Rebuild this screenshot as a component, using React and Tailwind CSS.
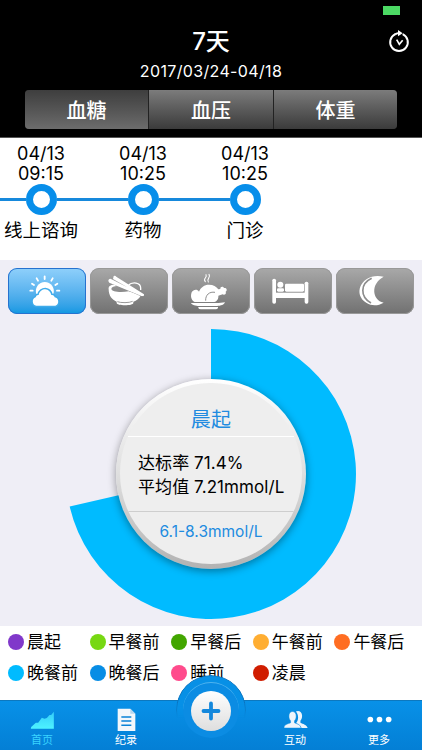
import React from "react";

const ICON_COMMON = { fill: "#fff", stroke: "none" };

function SunCloud() {
  return (
    <svg viewBox="24 30 234 138" className="block h-full w-full" {...ICON_COMMON}>
      <g stroke="#fff" strokeWidth="5.5" strokeLinecap="round">
        <path d="M134 55v8M110 61l4 7M158 61l-4 7M96 77l6 4M172 77l-6 4M91 98h7M171 98h7" />
      </g>
      <path d="M109 108a27 27 0 1 1 51 0z" />
      <path
        d="M109 143a13 13 0 0 1-2-25q2-8 9-7c2-11 11-17 20-17 9 1 16 8 18 17 6-1 9 2 10 7a13 13 0 0 1 2 25z"
        stroke="#3fabea"
        strokeWidth="9"
        style={{ paintOrder: "stroke" }}
      />
    </svg>
  );
}

function Bowl() {
  return (
    <svg viewBox="270 30 234 138" className="block h-full w-full" {...ICON_COMMON}>
      <path d="M384 82c14-12 38-9 38 8v6" fill="none" stroke="#fff" strokeWidth="4" />
      <path d="M326 94c-2-9 6-14 16-14l9 4c-8 0-16 3-17 8 0 11 32 11 52 8l37 11c-5 11-13 17-23 20v4c0 9-50 9-50 0v-4c-14-5-24-18-24-37z" />
      <path d="M352 131c10 4 36 4 46-1" fill="none" stroke="#838383" strokeWidth="2.5" />
      <path d="M344 58l85 54M329 69l97 43" stroke="#8f8f8f" strokeWidth="8" strokeLinecap="round" />
      <path d="M341 54q5-2 8 2l83 53q2 6-4 5l-89-51zM325 67q2-6 8-4l94 47q1 4-3 4l-96-40q-3-2-3-7z" />
    </svg>
  );
}

function Chicken() {
  return (
    <svg viewBox="0 0 234 138" className="block h-full w-full" {...ICON_COMMON}>
      <path d="M100 41c-9-10 7-11 2-21M109 42c-7-10 9-13 2-23" fill="none" stroke="#fff" strokeWidth="3.2" strokeLinecap="round" />
      <path d="M68 102c-11-5-13-18-9-29 5-9 17-10 22-2 5-13 16-21 30-21 13 0 22 5 28 14l6-1c-1-8 9-9 11-3 8-2 11 7 5 11 3 6-4 12-9 8l-13 4c1 9-4 17-12 19z" />
      <path d="M101 98c-1-17 11-28 28-25" fill="none" stroke="#8e8e8e" strokeWidth="3" />
      <path d="M57 105h83l19-2c-2 7-13 11-24 11H82c-11 0-23-3-25-9zM79 117h59v3q-2 4-7 4H87q-7 0-8-4z" />
    </svg>
  );
}

function Bed() {
  return (
    <svg viewBox="129 30 234 138" className="block h-full w-full" {...ICON_COMMON}>
      <rect x="184" y="62" width="11" height="75" rx="5" />
      <rect x="281" y="71" width="11" height="66" rx="5" />
      <rect x="190" y="104" width="96" height="16" />
      <circle cx="208" cy="80" r="9" />
      <rect x="198" y="91" width="21" height="10" rx="4" />
      <rect x="222" y="77" width="57" height="24" rx="4" />
    </svg>
  );
}

function Moon() {
  return (
    <svg viewBox="375 30 234 138" className="block h-full w-full" {...ICON_COMMON}>
      <path d="M518 56c-62-15-98 50-51 79 15 9 34 9 51-1-35-8-40-57 0-78z" />
      <path d="M482 61c-34 16-36 54-2 74" fill="none" stroke="#8d8d8d" strokeWidth="5" />
    </svg>
  );
}

const MEALS = [SunCloud, Bowl, Chicken, Bed, Moon];

const LEGEND = [
  ["晨起", "bg-[#8038ca]"],
  ["早餐前", "bg-[#77d812]"],
  ["早餐后", "bg-[#42a600]"],
  ["午餐前", "bg-[#ffae32]"],
  ["午餐后", "bg-[#ff6d22]"],
  ["晚餐前", "bg-[#00bbff]"],
  ["晚餐后", "bg-[#078de5]"],
  ["睡前", "bg-[#ff4b8c]"],
  ["凌晨", "bg-[#d01d00]"],
];

const EVENTS = [
  ["04/13", "09:15", "线上谘询"],
  ["04/13", "10:25", "药物"],
  ["04/13", "10:25", "门诊"],
];

function Header() {
  return (
    <header className="relative flex h-[138px] flex-col items-center border-b border-[#555] bg-black text-white">
      <div className="absolute left-[383px] top-[6px] h-[9px] w-[17px] bg-[#4cd964]" />
      <svg className="absolute left-[387px] top-[29px] h-[24px] w-[24px]" viewBox="0 0 72 72" fill="none" stroke="#fff">
        <path d="M47 15.500A26.500 26.500 0 1 1 25 15.500" strokeWidth="6" />
        <path d="M24 16q6-4 14-4" strokeWidth="6" />
        <path d="M33 3l14 9.500-14 9z" fill="#fff" stroke="none" />
        <path d="M29 32l8 14 10-12" strokeWidth="5" />
      </svg>
      <h1 className="mt-[26px] h-8 text-[24px] font-medium leading-8">7天</h1>
      <p className="mt-[3px] h-5 text-[16px] leading-5 tracking-[0.35px]">2017/03/24-04/18</p>
      <div className="mt-[9px] flex h-[39px] w-[372px] gap-px overflow-hidden rounded bg-[#222] text-[20px] font-medium leading-[42px]">
        <div className="w-[123px] bg-linear-to-b from-[#3e3e3e] to-[#6c6c6c] text-center">血糖</div>
        <div className="w-[124px] bg-linear-to-b from-[#7c7c7c] to-[#3b3b3b] text-center">血压</div>
        <div className="w-[123px] bg-linear-to-b from-[#7c7c7c] to-[#3b3b3b] text-center">体重</div>
      </div>
    </header>
  );
}

function Timeline() {
  return (
    <section className="flex h-[122px] bg-white pt-[5px] text-[18px] text-black">
      {EVENTS.map(([date, time, name], i) => (
        <div key={i} className={i === 0 ? "-ml-[10px] w-[102px] shrink-0" : "w-[102px] shrink-0"}>
          <div className="flex flex-col items-center">
            <div className="h-[21px] font-[Inter] leading-[22px]">{date}</div>
            <div className="h-[19px] font-[Inter] leading-5">{time}</div>
            <div className="flex h-[32px] w-full items-center">
              <div className="h-[3px] flex-1 bg-[#1689dc]" />
              <div className="h-[31px] w-[31px] rounded-full border-[7.5px] border-[#078eea] bg-white" />
              <div className={i === 2 ? "h-[3px] flex-1" : "h-[3px] flex-1 bg-[#1689dc]"} />
            </div>
            <div className="mt-[1px] h-7 whitespace-nowrap text-[18.5px] leading-7">{name}</div>
          </div>
        </div>
      ))}
    </section>
  );
}

function Dial() {
  return (
    <div className="grid h-[312px] place-items-center">
      <svg viewBox="0 0 312 312" className="col-start-1 row-start-1 h-[312px] w-[312px]">
        <path d="M156 160V15A145 145 0 1 1 14.7 192.6z" fill="#00bbff" />
      </svg>
      <div className="relative col-start-1 row-start-1 mt-[7px] h-[190px] w-[190px] rounded-full bg-linear-to-b from-white via-[#dfdfdf] to-[#b2b2b2] px-[4px] pb-[5px] pt-[4px] shadow-[0_2px_9px_rgba(0,0,0,0.4)]">
        <div className="flex h-full w-full flex-col overflow-hidden rounded-full bg-[#eee]">
          <div className="flex h-[54px] items-end justify-center border-b-[1.5px] border-white text-[20px] leading-8 tracking-[0.3px] text-[#218be0]">
            晨起
          </div>
          <div className="flex h-[75px] flex-col justify-center whitespace-nowrap border-b border-[#cecece] pl-[18px] pt-[2px] text-[17px] leading-6 tracking-[0.08px] text-black">
            <div>达标率 71.4%</div>
            <div>平均值 7.21mmol/L</div>
          </div>
          <div className="pt-[8px] text-center text-[15.5px] leading-6 text-[#218be0]">6.1-8.3mmol/L</div>
        </div>
      </div>
    </div>
  );
}

function TabBar() {
  const tab = "flex flex-col items-center text-[11px] leading-4 text-white";
  return (
    <nav className="relative flex h-[50px] border-t border-[#0c78bf] bg-linear-to-b from-[#0891e8] to-[#047fd5]">
      <div className="absolute -top-[26px] left-[176px] h-[70px] w-[70px]">
        <div className="absolute inset-0 rounded-full border border-[#0a72bd] bg-[#0790e6] [mask-image:linear-gradient(to_bottom,black_40%,transparent_62%)]" />
        <div className="relative grid h-[70px] w-[70px] place-items-center">
          <div className="grid h-[56px] w-[56px] place-items-center rounded-full border-t border-[#50b4ef] bg-[#0b8ce3]">
            <div className="grid h-[40px] w-[40px] place-items-center rounded-full bg-linear-to-b from-white to-[#dedede]">
              <svg viewBox="0 0 40 40" className="h-10 w-10">
                <path d="M20 12.5v15M12.500 20h15" stroke="#1488dc" strokeWidth="3.8" strokeLinecap="round" />
              </svg>
            </div>
          </div>
        </div>
      </div>
      <div className="flex w-[84px] flex-col items-center text-[11px] leading-4 text-[#39d3ff]">
        <svg viewBox="90 270 74 60" className="mt-[9px] h-[20px] w-[25px]">
          <defs>
            <linearGradient id="trend" x1="0" y1="0" x2="0" y2="1">
              <stop offset="0" stopColor="#35cdfa" />
              <stop offset="1" stopColor="#4df2ff" />
            </linearGradient>
          </defs>
          <path d="M92 326l1-5 14-13h7l11-15 8 3 7-2 8-9h5l8-10v51z" fill="url(#trend)" />
        </svg>
        <div className="mt-[2px]">首页</div>
      </div>
      <div className={tab + " w-[84px]"}>
        <svg viewBox="0 0 57 72" className="mt-[7px] h-[24px] w-[19px]">
          <path d="M2 2h38l15 15v52H2z" fill="#f3f7fb" />
          <path d="M40 2v15h15z" fill="#b7d6ee" />
          <path d="M13 27h30M13 39h30M13 52h30" stroke="#0a83d8" strokeWidth="4.5" />
        </svg>
        <div>纪录</div>
      </div>
      <div className="w-[85px]" />
      <div className={tab + " w-[84px]"}>
        <svg viewBox="214 270 76 56" className="mt-[9px] h-[19px] w-[25px]" fill="#eef5fb">
          <path d="M253 274c8-5 20 0 19 14 0 7-3 11-5 14v6c8 4 19 6 22 16h-19c-3-9-12-12-16-15 8-10 8-25-1-35z" />
          <path d="M217 324c0-12 12-12 20-16v-6c-3-3-5-8-5-14-1-19 23-19 22 0 0 6-2 11-5 14v6c8 4 19 5 20 16z" stroke="#078be0" strokeWidth="1.5" />
        </svg>
        <div className="mt-[3px]">互动</div>
      </div>
      <div className={tab + " w-[84px]"}>
        <svg viewBox="0 0 75 20" className="mt-[15px] h-[7px] w-[25px]" fill="#fff">
          <circle cx="10" cy="10" r="8.5" />
          <circle cx="37.5" cy="10" r="8.5" />
          <circle cx="65" cy="10" r="8.5" />
        </svg>
        <div className="mt-[9px]">更多</div>
      </div>
    </nav>
  );
}

export default function App() {
  return (
    <div className="flex h-[750px] w-[422px] flex-col overflow-hidden bg-white font-[Inter,'Noto_Sans_CJK_SC',sans-serif]">
      <Header />
      <Timeline />
      <main className="h-[366px] bg-[#efeef6]">
        <div className="flex h-[54px] gap-1 px-2 pt-2">
          {MEALS.map((Icon, i) => (
            <div
              key={i}
              className={
                i === 0
                  ? "h-[46px] w-[78px] overflow-hidden rounded-[9px] bg-linear-to-b from-[#8fd0fb] to-[#0898e2] shadow-[inset_0_0_0_1px_#2672cf]"
                  : "h-[46px] w-[78px] overflow-hidden rounded-[9px] bg-linear-to-b from-[#a9a9a9] to-[#717171] shadow-[inset_0_0_0_1px_#999]"
              }
            >
              <Icon />
            </div>
          ))}
        </div>
        <Dial />
      </main>
      <section className="grid h-[74px] grid-cols-[repeat(5,81.6px)] grid-rows-[31px_31px] content-start bg-white pl-2 text-[17px] text-black">
        {LEGEND.map(([name, color]) => (
          <div key={name} className="flex items-center gap-[3px] whitespace-nowrap">
            <span className={"h-[16px] w-[16px] shrink-0 rounded-full " + color} />
            <span className="pt-[2px]">{name}</span>
          </div>
        ))}
      </section>
      <TabBar />
    </div>
  );
}
